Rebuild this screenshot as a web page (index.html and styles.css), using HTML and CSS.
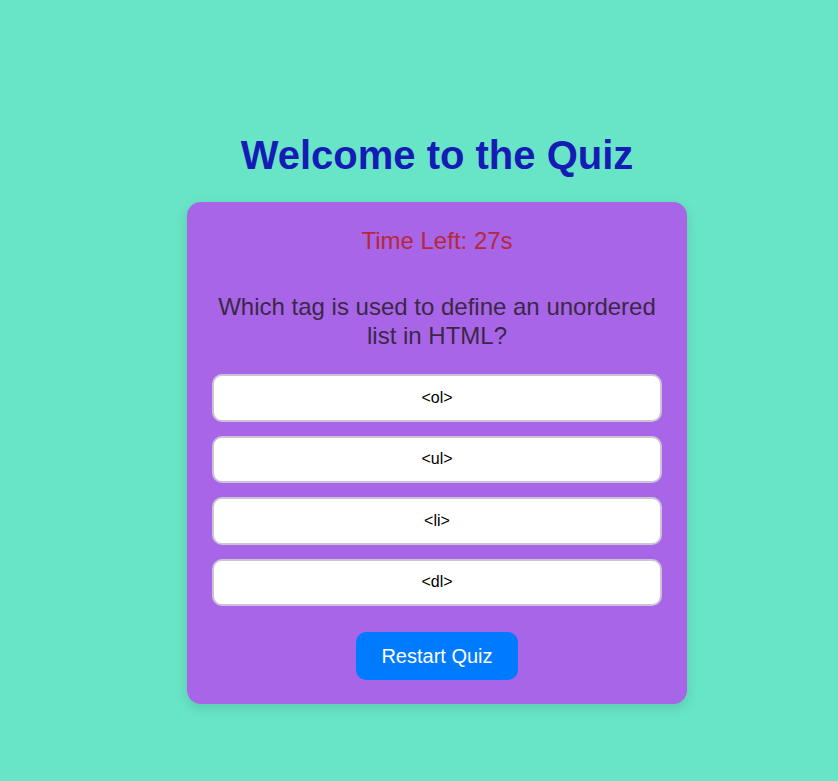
FILE: index.html
```html
<!DOCTYPE html>
<html>
<head>
<meta charset="utf-8">
<link rel="stylesheet" href="styles.css">
</head>
<body>
<div class="wrap">
  <h1 class="title">Welcome to the Quiz</h1>
  <div class="card">
    <div class="timer">Time Left: 27s</div>
    <div class="question">Which tag is used to define an unordered list in HTML?</div>
    <div class="options">
      <button class="opt">&lt;ol&gt;</button>
      <button class="opt">&lt;ul&gt;</button>
      <button class="opt">&lt;li&gt;</button>
      <button class="opt">&lt;dl&gt;</button>
    </div>
    <button class="restart">Restart Quiz</button>
  </div>
</div>
</body>
</html>
```
FILE: styles.css
```css
html, body { margin: 0; padding: 0; }
body {
  background: #68e5c6;
  font-family: "Liberation Sans", Arial, sans-serif;
  min-height: 781px;
}
.wrap {
  width: 500px;
  margin-left: 187px;
  padding-top: 132px;
  display: flex;
  flex-direction: column;
  align-items: center;
}
.title {
  margin: 0 0 24px;
  font-size: 40px;
  line-height: 46px;
  color: #141cb5;
  font-weight: bold;
}
.card {
  box-sizing: border-box;
  width: 500px;
  background: #a965e8;
  border-radius: 14px;
  padding: 25px 25px 24px;
  box-shadow: 0 4px 12px rgba(0,0,0,0.12);
  display: flex;
  flex-direction: column;
  align-items: center;
}
.timer {
  font-size: 24px;
  line-height: 28px;
  color: #b3283c;
  margin-bottom: 37px;
}
.question {
  font-size: 24px;
  line-height: 29px;
  color: #3a2846;
  text-align: center;
  margin-bottom: 24px;
}
.options {
  width: 450px;
  display: flex;
  flex-direction: column;
  gap: 14px;
  margin-bottom: 26px;
}
.opt {
  box-sizing: border-box;
  height: 47.5px;
  background: #fff;
  border: 2px solid #cbc4d6;
  border-radius: 10px;
  font-family: "Liberation Sans", Arial, sans-serif;
  font-size: 16px;
  color: #000;
  padding: 0;
}
.restart {
  box-sizing: border-box;
  width: 162px;
  height: 48px;
  background: #007bff;
  color: #fff;
  border: none;
  border-radius: 10px;
  font-family: "Liberation Sans", Arial, sans-serif;
  font-size: 20px;
  padding: 0;
}
```
